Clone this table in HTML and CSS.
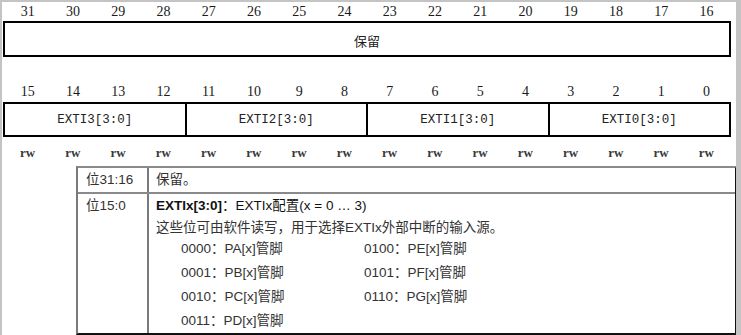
FILE: index.html
```html
<!DOCTYPE html>
<html lang="zh">
<head>
<meta charset="utf-8">
<link rel="stylesheet" href="styles.css">
</head>
<body>
<div class="frame">
  <div class="reg">
    <div class="bits">
      <span>31</span><span>30</span><span>29</span><span>28</span><span>27</span><span>26</span><span>25</span><span>24</span>
      <span>23</span><span>22</span><span>21</span><span>20</span><span>19</span><span>18</span><span>17</span><span>16</span>
    </div>
    <div class="box box-hi">
      <div class="field full">保留</div>
    </div>
    <div class="bits bits-lo">
      <span>15</span><span>14</span><span>13</span><span>12</span><span>11</span><span>10</span><span>9</span><span>8</span>
      <span>7</span><span>6</span><span>5</span><span>4</span><span>3</span><span>2</span><span>1</span><span>0</span>
    </div>
    <div class="box box-lo">
      <div class="field">EXTI3[3:0]</div>
      <div class="field">EXTI2[3:0]</div>
      <div class="field">EXTI1[3:0]</div>
      <div class="field last">EXTI0[3:0]</div>
    </div>
    <div class="bits rw">
      <span>rw</span><span>rw</span><span>rw</span><span>rw</span><span>rw</span><span>rw</span><span>rw</span><span>rw</span>
      <span>rw</span><span>rw</span><span>rw</span><span>rw</span><span>rw</span><span>rw</span><span>rw</span><span>rw</span>
    </div>
  </div>
  <div class="desc">
    <div class="row row1">
      <div class="c1">位31:16</div>
      <div class="c2">保留。</div>
    </div>
    <div class="row row2">
      <div class="c1 c1-top">位15:0</div>
      <div class="c2">
        <div class="l1"><b>EXTIx[3:0]</b>：EXTIx配置(x = 0 … 3)</div>
        <div class="l2">这些位可由软件读写，用于选择EXTIx外部中断的输入源。</div>
        <div class="opts">
          <div>0000：PA[x]管脚</div><div>0100：PE[x]管脚</div>
          <div>0001：PB[x]管脚</div><div>0101：PF[x]管脚</div>
          <div>0010：PC[x]管脚</div><div>0110：PG[x]管脚</div>
          <div>0011：PD[x]管脚</div><div></div>
        </div>
      </div>
    </div>
  </div>
</div>
</body>
</html>
```
FILE: styles.css
```css
html, body {
  margin: 0;
  padding: 0;
  background: #fff;
}
.frame {
  width: 734px;
  height: 333px;
  border-top: 2px solid #c4c4c4;
  border-left: 2px solid #c4c4c4;
  border-right: 5px solid #c4c4c4;
  background: #fff;
  overflow: hidden;
}
.reg {
  margin-left: 1px;
  width: 728px;
}
.bits {
  display: grid;
  grid-template-columns: repeat(16, 1fr);
  padding: 0 2px;
  height: 19px;
  line-height: 19px;
  font-family: "Liberation Serif", "Noto Sans CJK SC", serif;
  font-size: 14px;
  color: #1a1a1a;
  text-align: center;
}
.bits-lo {
  margin-top: 25px;
  height: 20px;
  line-height: 20px;
}
.rw {
  height: 32px;
  line-height: 16px;
  padding-top: 8px;
  box-sizing: border-box;
  font-weight: bold;
  font-size: 13px;
  color: #3a3a3a;
  margin-bottom: -3px;
}
.box {
  display: flex;
  border: 2px solid #000;
  box-sizing: border-box;
}
.box-hi {
  height: 36px;
}
.box-lo {
  height: 35px;
}
.field {
  flex: 1;
  display: flex;
  align-items: center;
  justify-content: center;
  border-right: 2px solid #000;
  font-family: "Liberation Mono", monospace;
  font-size: 12.5px;
  color: #222;
}
.field.last, .field.full {
  border-right: none;
}
.field.full {
  font-family: "Noto Sans CJK SC", sans-serif;
  font-size: 13px;
  padding-top: 2px;
}
.desc {
  margin-left: 74px;
  width: 657px;
  border-top: 2px solid #8a8a8a;
  border-right: 2px solid #111;
  border-bottom: 2px solid #111;
  border-left: 2px solid #7a7a7a;
  font-family: "Liberation Sans", "Noto Sans CJK SC", sans-serif;
  font-size: 13.5px;
  color: #333;
}
.row {
  display: flex;
}
.row1 {
  height: 24px;
  border-bottom: 2px solid #8a8a8a;
  line-height: 24px;
}
.row2 {
  height: 139px;
}
.c1 {
  width: 71px;
  flex: none;
  padding-left: 8px;
  box-sizing: border-box;
  border-right: 2px solid #7a7a7a;
}
.c1-top {
  line-height: 24px;
}
.c2 {
  padding-left: 7px;
  flex: 1;
}
.l1 {
  line-height: 24px;
  color: #111;
}
.l1 b {
  font-weight: bold;
}
.l2 {
  line-height: 19px;
}
.opts {
  display: grid;
  grid-template-columns: 183px 1fr;
  padding-left: 25px;
  line-height: 24px;
}
```
